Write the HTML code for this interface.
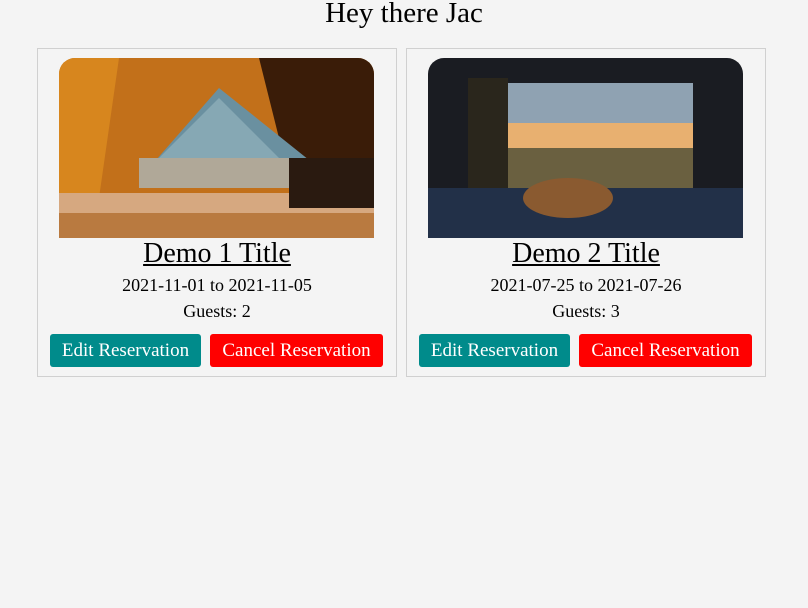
<!DOCTYPE html>
<html><head><style>
body{margin:0;width:808px;height:608px;background:#f4f4f4;font-family:"Liberation Serif",serif;color:#000;position:relative;overflow:hidden}
h1{position:absolute;top:0;left:0;width:808px;margin:0;text-align:center;font-weight:normal;font-size:29px;line-height:26px}
.card{position:absolute;top:48px;width:358px;height:327px;border:1px solid #d0d0d0;text-align:center}
.img{position:absolute;left:21px;top:9px;width:315px;height:180px;border-radius:16px 16px 0 0;overflow:hidden}
.t{position:absolute;top:188px;left:0;width:100%;font-size:28px;text-decoration:underline;line-height:34px}
.d{position:absolute;top:226px;left:0;width:100%;font-size:18px}
.g{position:absolute;top:252px;left:0;width:100%;font-size:18px}
.b{position:absolute;top:285px;height:33px;border-radius:3px;color:#fff;font-size:19px;line-height:33px;text-align:center;white-space:nowrap}
.e{left:12px;width:151px;background:#008b8b}
.c{left:172px;width:173px;background:#ff0000}
</style></head><body>
<h1>Hey there Jac</h1>
<div class="card" style="left:37px">
<div class="img"><svg width="315" height="180">
<rect width="315" height="180" fill="#c2701a"/>
<polygon points="200,0 315,0 315,180 240,160" fill="#3a1c08"/>
<polygon points="0,0 60,0 40,140 0,140" fill="#d7861e"/>
<polygon points="160,30 90,110 80,130 230,130 260,110" fill="#6a90a0"/>
<polygon points="160,40 100,100 220,100" fill="#86a8b4"/>
<rect x="80" y="100" width="160" height="30" fill="#b0a898"/>
<rect x="0" y="135" width="315" height="45" fill="#d6a880"/>
<rect x="0" y="155" width="315" height="25" fill="#b97a40"/>
<rect x="230" y="100" width="85" height="50" fill="#2a1a10"/>
</svg></div>
<div class="t">Demo 1 Title</div>
<div class="d">2021-11-01 to 2021-11-05</div>
<div class="g">Guests: 2</div>
<div class="b e">Edit Reservation</div><div class="b c">Cancel Reservation</div>
</div>
<div class="card" style="left:406px">
<div class="img"><svg width="315" height="180">
<rect width="315" height="180" fill="#1a1c22"/>
<rect x="70" y="25" width="195" height="110" fill="#9aa8b0"/>
<rect x="70" y="25" width="195" height="40" fill="#8fa2b2"/>
<rect x="70" y="65" width="195" height="25" fill="#e8b070"/>
<rect x="70" y="90" width="195" height="45" fill="#6a6040"/>
<rect x="40" y="20" width="40" height="120" fill="#2a261c"/>
<rect x="0" y="130" width="315" height="50" fill="#223048"/>
<ellipse cx="140" cy="140" rx="45" ry="20" fill="#8a5a30"/>
</svg></div>
<div class="t">Demo 2 Title</div>
<div class="d">2021-07-25 to 2021-07-26</div>
<div class="g">Guests: 3</div>
<div class="b e">Edit Reservation</div><div class="b c">Cancel Reservation</div>
</div>
</body></html>
